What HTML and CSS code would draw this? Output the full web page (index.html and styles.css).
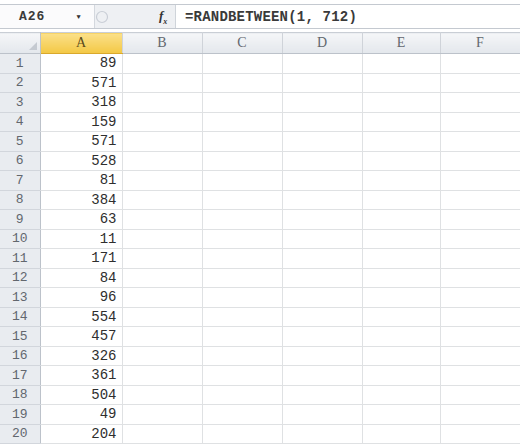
FILE: index.html
```html
<!DOCTYPE html>
<html lang="en">
<head>
    <meta charset="UTF-8">
    <title>Sheet1</title>
    <link rel="stylesheet" href="styles.css">
</head>
<body>
    <div class="formula-bar">
        <div class="name-box">
            <span class="cell-ref">A26</span>
            <span class="drop">&#9660;</span>
        </div>
        <div class="fx-tools">
            <svg class="cancel" width="14" height="14" viewBox="0 0 14 14">
                <circle cx="7" cy="7" r="5.5" fill="none" stroke="#c9ced6" stroke-width="1.2"/>
            </svg>
            <span class="fx">f<sub>x</sub></span>
        </div>
        <div class="formula">=RANDBETWEEN(1, 712)</div>
    </div>

    <table class="sheet">
        <colgroup>
            <col class="c-head">
            <col class="c-a">
            <col class="c-col">
            <col class="c-col">
            <col class="c-col">
            <col class="c-e">
            <col class="c-col">
        </colgroup>
        <thead>
            <tr>
                <th class="corner"></th>
                <th class="active">A</th>
                <th>B</th>
                <th>C</th>
                <th>D</th>
                <th>E</th>
                <th>F</th>
            </tr>
        </thead>
        <tbody>
            <tr><th>1</th><td>89</td><td></td><td></td><td></td><td></td><td></td></tr>
            <tr><th>2</th><td>571</td><td></td><td></td><td></td><td></td><td></td></tr>
            <tr><th>3</th><td>318</td><td></td><td></td><td></td><td></td><td></td></tr>
            <tr><th>4</th><td>159</td><td></td><td></td><td></td><td></td><td></td></tr>
            <tr><th>5</th><td>571</td><td></td><td></td><td></td><td></td><td></td></tr>
            <tr><th>6</th><td>528</td><td></td><td></td><td></td><td></td><td></td></tr>
            <tr><th>7</th><td>81</td><td></td><td></td><td></td><td></td><td></td></tr>
            <tr><th>8</th><td>384</td><td></td><td></td><td></td><td></td><td></td></tr>
            <tr><th>9</th><td>63</td><td></td><td></td><td></td><td></td><td></td></tr>
            <tr><th>10</th><td>11</td><td></td><td></td><td></td><td></td><td></td></tr>
            <tr><th>11</th><td>171</td><td></td><td></td><td></td><td></td><td></td></tr>
            <tr><th>12</th><td>84</td><td></td><td></td><td></td><td></td><td></td></tr>
            <tr><th>13</th><td>96</td><td></td><td></td><td></td><td></td><td></td></tr>
            <tr><th>14</th><td>554</td><td></td><td></td><td></td><td></td><td></td></tr>
            <tr><th>15</th><td>457</td><td></td><td></td><td></td><td></td><td></td></tr>
            <tr><th>16</th><td>326</td><td></td><td></td><td></td><td></td><td></td></tr>
            <tr><th>17</th><td>361</td><td></td><td></td><td></td><td></td><td></td></tr>
            <tr><th>18</th><td>504</td><td></td><td></td><td></td><td></td><td></td></tr>
            <tr><th>19</th><td>49</td><td></td><td></td><td></td><td></td><td></td></tr>
            <tr><th>20</th><td>204</td><td></td><td></td><td></td><td></td><td></td></tr>
        </tbody>
    </table>
</body>
</html>
```

FILE: styles.css
```css
:root {
    --grid: #dfe1e3;
    --head-bg: #e9ecf0;
    --head-line: #bcc2ca;
    --text: #2e2e2e;
    --head-text: #62676e;
}
body {
    margin: 0;
    background: #fff;
    font-family: "Liberation Mono", "DejaVu Sans Mono", monospace;
    color: var(--text);
    width: 520px;
    overflow: hidden;
}

/* formula bar */
.formula-bar {
    display: flex;
    height: 23px;
    margin-top: 4px;
    border-top: 1px solid #c4c9d0;
    border-bottom: 1px solid #c4c9d0;
    background: #eef0f3;
}
.name-box {
    width: 94px;
    display: flex;
    align-items: center;
    background: #fbfbfc;
    border-right: 1px solid #d4d8de;
}
.cell-ref {
    margin-left: 19px;
    font-weight: bold;
    font-size: 13px;
    letter-spacing: 1px;
    color: #3a3a3a;
}
.drop {
    margin-left: 31px;
    font-size: 7px;
    color: #333;
}
.fx-tools {
    width: 80px;
    display: flex;
    align-items: center;
    border-right: 1px solid #cfd4da;
}
.cancel {
    margin-left: 0;
}
.fx {
    margin-left: 50px;
    font-family: "Liberation Serif", serif;
    font-style: italic;
    font-weight: bold;
    font-size: 13px;
    color: #333;
}
.fx sub {
    font-size: 8px;
}
.formula {
    flex: 1;
    display: flex;
    align-items: center;
    padding-left: 9px;
    background: #fff;
    font-weight: bold;
    font-size: 14px;
    letter-spacing: 0.2px;
    color: #3a3a3a;
}

/* grid */
.sheet {
    margin-top: 3px;
    border-collapse: collapse;
    table-layout: fixed;
    width: 520px;
    border-top: 1px solid #c9ced5;
}
.c-head { width: 40px; }
.c-a { width: 82px; }
.c-col { width: 80px; }
.c-e { width: 78px; }
.sheet thead th {
    height: 20px;
    padding: 0;
    background: linear-gradient(#f5f6f8, #e3e7ec);
    border-right: 1px solid #cfd3d9;
    border-bottom: 1px solid var(--head-line);
    font-family: "Liberation Serif", serif;
    font-weight: normal;
    font-size: 14px;
    color: var(--head-text);
}
.sheet thead th.active {
    background: linear-gradient(#fbe08a, #f3c844);
    border-bottom-color: #d9a82c;
    color: #5a4a1c;
}
.sheet thead th.corner {
    position: relative;
    border-right-color: var(--head-line);
}
.corner::after {
    content: "";
    position: absolute;
    right: 3px;
    bottom: 3px;
    border-left: 8px solid transparent;
    border-bottom: 8px solid #c5cad1;
}
.sheet tbody tr {
    height: 19.5px;
}
.sheet tbody th {
    padding: 0;
    background: var(--head-bg);
    border-right: 1px solid var(--head-line);
    border-bottom: 1px solid #d2d6dc;
    font-weight: normal;
    font-size: 13px;
    color: var(--head-text);
}
.sheet td {
    padding: 0 5px 0 0;
    border-right: 1px solid var(--grid);
    border-bottom: 1px solid var(--grid);
    text-align: right;
    font-size: 14px;
    color: var(--text);
}
```
